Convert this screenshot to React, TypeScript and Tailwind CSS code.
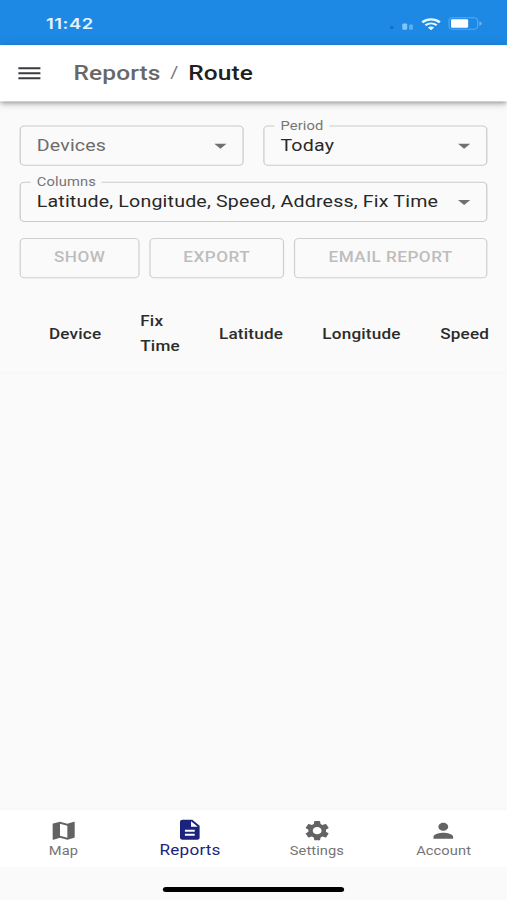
import { ComponentType } from 'react';
import { MdArrowDropDown, MdDescription, MdMenu, MdPerson, MdSettings } from 'react-icons/md';

function MapIcon({ className }: { className?: string }) {
  return (
    <svg viewBox="0 0 24 24" fill="currentColor" className={className}>
      <path d="M20.5 3l-.16.03L15 5.1 9 3 3.36 4.9c-.21.07-.36.25-.36.48V20.500c0 .28.22.5.5.5l.16-.03L9 18.900l6 2.100 5.640-1.900c.21-.07.36-.25.36-.48V3.500c0-.28-.22-.5-.5-.5zM15 19l-6-2.110V5l6 2.110V19z" />
    </svg>
  );
}

function StatusBar() {
  return (
    <div className="flex h-[44.8px] shrink-0 items-start justify-between bg-[#1e88e5] pl-[37.5px] pr-[20px] pt-[16px] text-[#e6f6ff]">
      <span className="font-[Inter,sans-serif] text-[15px] font-semibold leading-[15px] tracking-[0.45px]">11:42</span>
      <div className="flex h-[15px] items-center">
        <svg width="22" height="15" viewBox="0 0 22 15" className="mr-[5px]">
          <circle cx="3" cy="11.5" r="1.3" fill="#1565c0" />
          <rect x="11.500" y="7.500" width="4" height="6" rx="1" fill="#84c5fa" />
          <rect x="17" y="8.5" width="3.2" height="5" rx="1" fill="#5fadf0" />
        </svg>
        <svg width="16" height="12" viewBox="0 0 16 12" fill="none" stroke="currentColor" className="mr-[6px]">
          <path d="M.8 4.200C5 .4 11 .4 15.200 4.200" strokeWidth="2.3" />
          <path d="M3.400 7.200c2.700-2.400 6.500-2.400 9.200 0" strokeWidth="2.100" />
          <path d="M5.4 9.4c1.5-1.200 3.700-1.200 5.200 0L8 12z" fill="currentColor" stroke="none" />
        </svg>
        <svg width="28" height="13" viewBox="0 0 28 13">
          <rect x=".6" y=".6" width="23.400" height="11.6" rx="3" fill="none" stroke="#55a9f0" />
          <rect x="2.3" y="2.200" width="14" height="8.400" rx="1.200" fill="#fff" />
          <path d="M25.400 4.200v4.400c1.500-.5 2-1.300 2-2.200s-.5-1.700-2-2.200z" fill="#67b3f3" />
        </svg>
      </div>
    </div>
  );
}

function Toolbar() {
  return (
    <header className="relative flex h-14 shrink-0 items-center bg-white pl-3 text-xl font-medium shadow-[0_2px_4px_-1px_rgba(0,0,0,0.3),0_4px_5px_0_rgba(0,0,0,0.14),0_1px_10px_0_rgba(0,0,0,0.12)]">
      <MdMenu className="mr-6 size-6 text-[#3c3c40]" />
      <span className="tracking-[0.1px] text-[#686868]">Reports</span>
      <span className="mx-2 text-base font-normal text-[#757575]">/</span>
      <span className="tracking-[0.1px] text-[#1f1f1f]">Route</span>
    </header>
  );
}

interface SelectFieldProps {
  label?: string;
  value: string;
  muted?: boolean;
}
function SelectField({ label, value, muted }: SelectFieldProps) {
  return (
    <div className="relative flex h-10 min-w-0 flex-1 items-center justify-between rounded border border-[#cacaca] pl-[13px] pr-[6px]">
      {label && (
        <span className="absolute -top-[9px] left-[8px] bg-[#fafafa] px-[5px] text-xs leading-4 tracking-[0.11px] text-[#757575]">
          {label}
        </span>
      )}
      <span
        className={
          muted ? 'pt-px tracking-[0.15px] text-[#6c6c6c]' : 'whitespace-nowrap pt-px tracking-[0.15px] text-[#282828]'
        }
      >
        {value}
      </span>
      <MdArrowDropDown className="size-6 shrink-0 text-[#707070]" />
    </div>
  );
}

function ReportButton({ text, className }: { text: string; className: string }) {
  return (
    <button
      disabled
      className={`h-10 rounded border border-[#cfcfcf] pb-px text-sm font-medium uppercase tracking-[0.4px] text-[#bdbdbd] ${className}`}
    >
      {text}
    </button>
  );
}

interface NavItemProps {
  icon: ComponentType<{ className?: string }>;
  label: string;
  selected?: boolean;
}
function NavItem({ icon: Icon, label, selected }: NavItemProps) {
  return (
    <a
      className={
        selected
          ? 'flex flex-1 flex-col items-center pt-[8.5px] text-[#1a237e]'
          : 'flex flex-1 flex-col items-center pt-[9px] text-[#636363]'
      }
    >
      <Icon className="size-6" />
      <span
        className={
          selected
            ? 'text-sm leading-[16px] tracking-[0.15px]'
            : 'text-xs leading-[16px] tracking-[0.05px] text-[#757575]'
        }
      >
        {label}
      </span>
    </a>
  );
}

export default function App() {
  return (
    <div className="h-[900px] w-[507px] overflow-hidden bg-[#fafafa]">
      {/* 414x896 device viewport stretched over the whole window */}
      <div className="flex h-[896px] w-[414px] origin-top-left scale-x-[1.2246] scale-y-[1.0045] flex-col bg-[#fafafa] font-[Roboto,sans-serif]">
        <StatusBar />
        <Toolbar />

        <div className="flex flex-col gap-4 px-4 pt-[24.2px]">
          <div className="flex gap-4">
            <SelectField value="Devices" muted />
            <SelectField label="Period" value="Today" />
          </div>
          <div className="flex">
            <SelectField label="Columns" value="Latitude, Longitude, Speed, Address, Fix Time" />
          </div>
          <div className="flex gap-2">
            <ReportButton text="Show" className="w-[98px]" />
            <ReportButton text="Export" className="w-[110px]" />
            <ReportButton text="Email report" className="flex-1" />
          </div>
        </div>

        <div className="mt-[15px] flex h-[80.5px] shrink-0 items-center overflow-hidden border-b border-[#f5f5f5] pl-10 text-sm font-medium leading-6 tracking-[0.15px] text-[#2c2c2c]">
          <span className="w-[74.5px] shrink-0">Device</span>
          <span className="w-[64.3px] shrink-0">
            Fix
            <br />
            Time
          </span>
          <span className="w-[84.4px] shrink-0">Latitude</span>
          <span className="w-[96.3px] shrink-0">Longitude</span>
          <span className="shrink-0">Speed</span>
        </div>

        <nav className="mt-auto flex h-[57.5px] shrink-0 bg-white shadow-[0_-1px_2px_rgba(0,0,0,0.05)]">
          <NavItem icon={MapIcon} label="Map" />
          <NavItem icon={MdDescription} label="Reports" selected />
          <NavItem icon={MdSettings} label="Settings" />
          <NavItem icon={MdPerson} label="Account" />
        </nav>
        <div className="flex h-[33px] shrink-0 justify-center pt-[20px]">
          <div className="h-[5px] w-[148px] rounded-full bg-black" />
        </div>
      </div>
    </div>
  );
}
